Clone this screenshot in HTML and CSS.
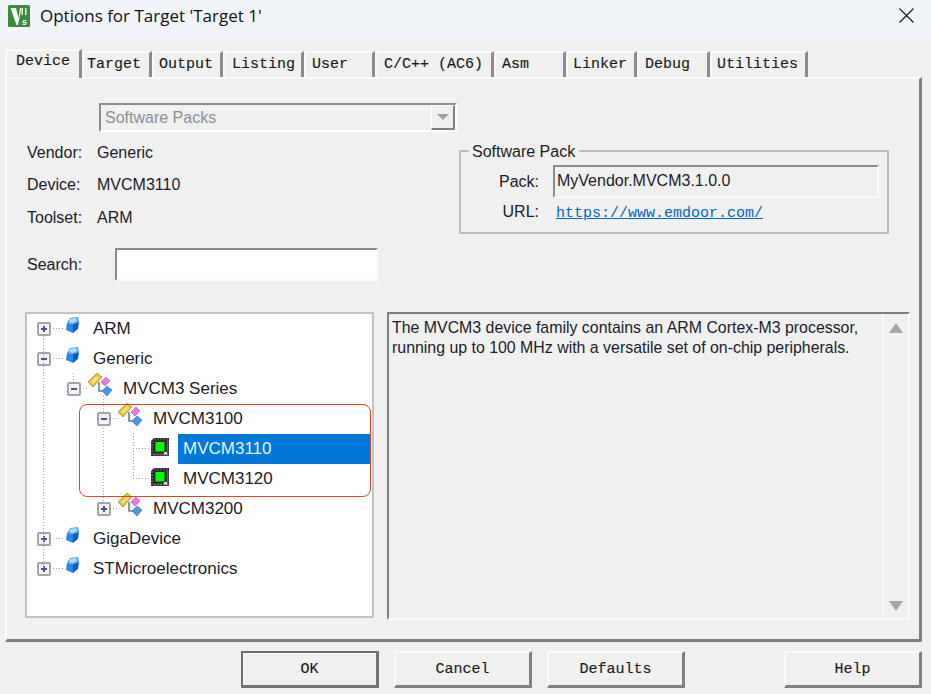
FILE: index.html
```html
<!DOCTYPE html>
<html lang="en">
<head>
<meta charset="utf-8">
<title>Options for Target 'Target 1'</title>
<link rel="stylesheet" href="styles.css">
</head>
<body>
<svg class="defs" width="0" height="0" aria-hidden="true">
  <symbol id="cube" viewBox="0 0 15 17">
    <path d="M5 1 13 0 14 5 8 7 2 6Z" fill="#4fa8f0"/>
    <path d="M2 6 8 7 8 16 1 13Z" fill="#2b86e6"/>
    <path d="M8 7 14 5 13 12 8 16Z" fill="#0f5fb8"/>
    <path d="M5 2 11 1 12 4 8 6 4 5Z" fill="#a8dcfa"/>
  </symbol>
  <symbol id="series" viewBox="0 0 24 23">
    <path d="M11 9V18H16" fill="none" stroke="#6a7c98" stroke-width="1.6"/>
    <path d="M0 9 9 0 14 4 5 14Z" fill="#e6c23c" stroke="#a88a20" stroke-width=".7"/>
    <path d="M3 9 9 3 11 5 5 11Z" fill="#f5df80"/>
    <path d="M13 9 18 4 22 8 17 13Z" fill="#e47ce0" stroke="#b050b0" stroke-width=".6"/>
    <path d="M14 18 19 13 24 17 19 23Z" fill="#4d94e4" stroke="#2f6cb4" stroke-width=".6"/>
  </symbol>
  <symbol id="chip" viewBox="0 0 18 18">
    <path d="M3 0H18V18H0V3Z" fill="#262626"/>
    <path d="M4 0v18M7 0v18M10 0v18M13 0v18M16 0v18M0 4h18M0 7h18M0 10h18M0 13h18M0 16h18" stroke="#9a9a9a" stroke-width=".7" fill="none"/>
    <rect x="2.500" y="2.500" width="13" height="13" fill="#262626"/>
    <rect x="4.500" y="4" width="9" height="9.500" fill="#0f0"/>
    <rect x="13" y="14" width="3" height="2.500" fill="#ddd"/>
  </symbol>
</svg>

<header class="titlebar">
  <svg class="logo" width="22" height="22" viewBox="0 0 22 22" aria-hidden="true">
    <rect width="22" height="22" rx="1.5" fill="#3c8a3e"/>
    <path d="M2.500 3H8L10.500 13 12 3H13.500L10 20H8.500Z" fill="#f4f8f0"/>
    <path d="M13.500 3H15V10H13.500ZM17 3H18.500V10H17Z" fill="#e8f0e0"/>
    <text x="14" y="19.500" class="logo-s">s</text>
  </svg>
  <span class="title">Options for Target 'Target 1'</span>
  <svg class="close" width="15" height="15" viewBox="0 0 15 15" aria-hidden="true">
    <path d="M.5.5 14.500 14.500M14.500.5.5 14.500" stroke="#111" stroke-width="1.100" fill="none"/>
  </svg>
</header>

<nav class="tabs">
  <div class="tab tab-active">Device</div>
  <div class="tab">Target</div>
  <div class="tab">Output</div>
  <div class="tab">Listing</div>
  <div class="tab">User</div>
  <div class="tab">C/C++ (AC6)</div>
  <div class="tab">Asm</div>
  <div class="tab">Linker</div>
  <div class="tab">Debug</div>
  <div class="tab">Utilities</div>
</nav>

<main class="panel">
  <div class="combo">
    <span class="combo-text">Software Packs</span>
    <span class="combo-btn"><i class="tri tri-down-small"></i></span>
  </div>

  <section class="info">
    <div class="left">
      <div class="facts">
        <span>Vendor:</span><span class="val-generic">Generic</span>
        <span>Device:</span><span>MVCM3110</span>
        <span>Toolset:</span><span>ARM</span>
      </div>
      <div class="search">
        <label class="search-label" for="s">Search:</label>
        <input class="sunken search-input" id="s" type="text">
      </div>
    </div>
    <div class="group">
      <div class="legend">Software Pack</div>
      <div class="pack-row">
        <span class="pack-label">Pack:</span>
        <div class="sunken pack-field">MyVendor.MVCM3.1.0.0</div>
      </div>
      <div class="url-row">
        <span class="pack-label">URL:</span>
        <a class="url" href="#">https://www.emdoor.com/</a>
      </div>
    </div>
  </section>

  <section class="lower">
    <div class="tree">
      <div class="row l0"><i class="exp plus"></i><svg class="ic-cube"><use href="#cube"/></svg><span class="name">ARM</span></div>
      <div class="row l0"><i class="exp"></i><svg class="ic-cube"><use href="#cube"/></svg><span class="name">Generic</span></div>
      <div class="row l1"><i class="exp"></i><svg class="ic-series"><use href="#series"/></svg><span class="name">MVCM3 Series</span></div>
      <div class="row l2"><i class="exp"></i><svg class="ic-series"><use href="#series"/></svg><span class="name">MVCM3100</span></div>
      <div class="row l3"><svg class="ic-chip"><use href="#chip"/></svg><span class="name selected">MVCM3110</span></div>
      <div class="row l3"><svg class="ic-chip"><use href="#chip"/></svg><span class="name plain">MVCM3120</span></div>
      <div class="row l2"><i class="exp plus"></i><svg class="ic-series"><use href="#series"/></svg><span class="name">MVCM3200</span></div>
      <div class="row l0"><i class="exp plus"></i><svg class="ic-cube"><use href="#cube"/></svg><span class="name">GigaDevice</span></div>
      <div class="row l0"><i class="exp plus"></i><svg class="ic-cube"><use href="#cube"/></svg><span class="name">STMicroelectronics</span></div>
      <svg class="lines" width="345" height="302" aria-hidden="true">
        <path d="M16.500 22V254M23 14.500H36M23 44.500H36M23 224.500H36M23 254.500H36M46.500 59V67M53 74.500H62M76.500 82V98M76.500 111V188M83 104.500H92M83 194.500H92M106.500 119V165M106 134.500H124M106 164.500H124" fill="none" stroke="#a8a8a8" stroke-dasharray="1 2"/>
      </svg>
      <div class="callout"></div>
    </div>
    <div class="desc">
      <p class="desc-text">The MVCM3 device family contains an ARM Cortex-M3 processor,<br>running up to 100 MHz with a versatile set of on-chip peripherals.</p>
      <div class="scroll"><i class="tri tri-up"></i><i class="tri tri-down"></i></div>
    </div>
  </section>
</main>

<footer class="buttons">
  <button class="btn btn-default">OK</button>
  <button class="btn">Cancel</button>
  <button class="btn">Defaults</button>
  <button class="btn btn-help">Help</button>
</footer>
</body>
</html>
```
FILE: styles.css
```css
* { box-sizing: border-box; }
html, body { margin: 0; height: 694px; overflow: hidden; }
body {
  width: 931px;
  background: #f0f0f0;
  color: #1c1c2a;
  font: 16px/1.2 "Liberation Sans", Arial, sans-serif;
}
.defs { position: absolute; }

/* title bar */
.titlebar {
  height: 40px;
  background: #f0f4f9;
  display: flex;
  align-items: center;
  padding: 0 17px 0 8px;
}
.logo { margin-top: -9px; flex: none; }
.logo-s { font: bold 9px "Liberation Sans", sans-serif; fill: #fff; }
.title {
  margin-left: 10px;
  margin-top: -9px;
  font: 17px "Open Sans", sans-serif;
  color: #111;
}
.close { margin-left: auto; margin-top: -9px; }

/* tabs */
.tabs {
  display: grid;
  grid-template-columns: 77px 70px 71px 81px 71px 119px 72px 71px 73px 98px;
  margin: 11px 0 0 5px;
  height: 26px;
  width: 823px;
  position: relative;
  z-index: 1;
}
.tab {
  height: 26px;
  padding: 2px 0 0 6px;
  border-top: 2px solid #fafafa;
  border-left: 2px solid #fafafa;
  border-right: 3px solid #8c8c8c;
  font: 15px/20px "Liberation Mono", monospace;
  color: #1a1a1a;
  -webkit-text-stroke: .15px #1a1a1a;
  white-space: nowrap;
}
.tab:nth-child(2) { padding-left: 3px; }
.tab:nth-child(3), .tab:nth-child(8), .tab:nth-child(10) { padding-left: 5px; }
.tab:nth-child(4), .tab:nth-child(6) { padding-left: 7px; }
.tab.tab-active {
  height: 29px;
  margin-top: -2px;
  padding: 1px 0 0 9px;
  background: #f0f0f0;
  border-bottom: 0;
}

/* panel */
.panel {
  width: 917px;
  height: 565px;
  margin-left: 5px;
  padding-top: 24px;
  border-top: 2px solid #fafafa;
  border-left: 2px solid #fafafa;
  border-right: 3px solid #808080;
  border-bottom: 3px solid #808080;
}

.combo {
  margin-left: 92px;
  width: 358px;
  height: 29px;
  display: flex;
  align-items: center;
  border-top: 2px solid #8c8c8c;
  border-left: 2px solid #8c8c8c;
  border-right: 2px solid #fff;
  border-bottom: 2px solid #fff;
  padding-left: 4px;
  color: #8a8f98;
}
.combo-text { flex: 1; padding-top: 1px; }
.combo-btn {
  width: 24px;
  height: 25px;
  display: flex;
  align-items: center;
  justify-content: center;
  border-top: 1px solid #fff;
  border-left: 1px solid #fff;
  border-right: 2px solid #808080;
  border-bottom: 2px solid #808080;
}
.tri { display: block; width: 0; height: 0; border-style: solid; border-color: transparent; }
.tri-down-small { border-width: 6px 6px 0; border-top-color: #a0a0a0; }
.tri-up { border-width: 0 7px 10px; border-bottom-color: #a6a6a6; }
.tri-down { border-width: 10px 7px 0; border-top-color: #a6a6a6; }

/* info */
.info {
  display: grid;
  grid-template-columns: 452px 430px;
  align-items: start;
}
.left { padding: 4px 0 0 20px; }
.facts {
  display: grid;
  grid-template-columns: 70px 1fr;
  grid-auto-rows: 32.5px;
  align-items: center;
}
.search {
  display: flex;
  align-items: center;
  margin-top: 14.5px;
  height: 33px;
}
.search-label { width: 88px; }
.sunken {
  border-top: 2px solid #8c8c8c;
  border-left: 2px solid #8c8c8c;
  border-right: 2px solid #fafafa;
  border-bottom: 2px solid #fafafa;
  outline: none;
  border-radius: 0;
}
.search-input { width: 263px; height: 33px; background: #fff; padding: 0; margin: 0; }

.group {
  position: relative;
  margin-top: 18px;
  height: 84px;
  padding-top: 13px;
  border: 2px solid #bcbcbc;
}
.legend {
  position: absolute;
  left: 8px;
  top: -10px;
  padding: 0 4px 0 3px;
  line-height: 20px;
  background: #f0f0f0;
}
.pack-row { display: flex; align-items: center; height: 33px; }
.pack-label { width: 78px; text-align: right; flex: none; }
.pack-field {
  margin-left: 14px;
  width: 326px;
  height: 33px;
  line-height: 27px;
  padding-left: 2px;
}
.url-row { display: flex; align-items: center; margin-top: 1px; height: 26px; }
.url {
  margin: 3px 0 0 17px;
  font: 15px "Liberation Mono", monospace;
  color: #0066cc;
}

/* lower */
.lower { display: flex; margin: 31px 0 0 18px; gap: 13px; align-items: start; }
.tree {
  position: relative;
  width: 349px;
  height: 306px;
  background: #fff;
  border: 2px solid #c2c2c6;
  font-size: 17px;
}
.row { display: flex; align-items: center; height: 30px; }
.l0 { padding-left: 10px; }
.l1 { padding-left: 40px; }
.l2 { padding-left: 70px; }
.l3 { padding-left: 124px; }
.exp {
  position: relative;
  width: 14px;
  height: 14px;
  flex: none;
  background: #f2f2f2;
  border: 2px solid #a4a4a4;
  border-radius: 2px;
}
.exp::before {
  content: "";
  position: absolute;
  left: 2px;
  top: 4px;
  width: 6px;
  height: 2px;
  background: #4a5a90;
}
.plus::after {
  content: "";
  position: absolute;
  left: 4px;
  top: 2px;
  width: 2px;
  height: 6px;
  background: #4a5a90;
}
.ic-cube { width: 15px; height: 17px; margin: -7px 0 0 14px; flex: none; }
.ic-series { width: 24px; height: 23px; margin: -9px 0 0 7px; flex: none; }
.ic-chip { width: 18px; height: 18px; margin-top: -4px; flex: none; }
.name { margin-left: 13px; white-space: nowrap; }
.ic-series + .name { margin-left: 11px; }
.selected, .plain {
  align-self: stretch;
  display: flex;
  align-items: center;
  margin-left: 9px;
  padding-left: 5px;
  flex: 1;
}
.selected { background: #0078d7; color: #e8f2ff; margin-right: 2px; height: 30px; }
.lines { position: absolute; left: 0; top: 0; pointer-events: none; }
.callout {
  position: absolute;
  left: 52px;
  top: 90px;
  width: 292px;
  height: 93px;
  border: 1px solid #e8402c;
  border-radius: 8px;
  pointer-events: none;
}

.desc {
  display: flex;
  width: 523px;
  height: 308px;
  border-top: 2px solid #808080;
  border-left: 2px solid #808080;
  border-right: 2px solid #fafafa;
  border-bottom: 2px solid #fafafa;
}
.desc-text { flex: 1; margin: 0; padding: 4px 0 0 3px; line-height: 20px; font-size: 15.9px; }
.scroll {
  width: 26px;
  border-left: 2px solid #f8f8f8;
  display: flex;
  flex-direction: column;
  align-items: center;
  justify-content: space-between;
  padding: 9px 0 7px;
}

/* buttons */
.buttons { display: flex; margin: 9px 0 0 241px; gap: 15px; }
.btn {
  width: 138px;
  height: 37px;
  padding: 0;
  background: #f0f0f0;
  border-top: 2px solid #fafafa;
  border-left: 2px solid #fafafa;
  border-right: 3px solid #808080;
  border-bottom: 3px solid #808080;
  border-radius: 0;
  font: 15px "Liberation Mono", monospace;
  -webkit-text-stroke: .15px #1a1a1a;
  color: #1a1a1a;
}
.btn-default {
  border: 2px solid #707070;
  border-right-width: 3px;
  border-bottom-width: 3px;
  box-shadow: inset 1px 1px 0 #fafafa;
}
.btn-help { margin-left: 84px; }
```
